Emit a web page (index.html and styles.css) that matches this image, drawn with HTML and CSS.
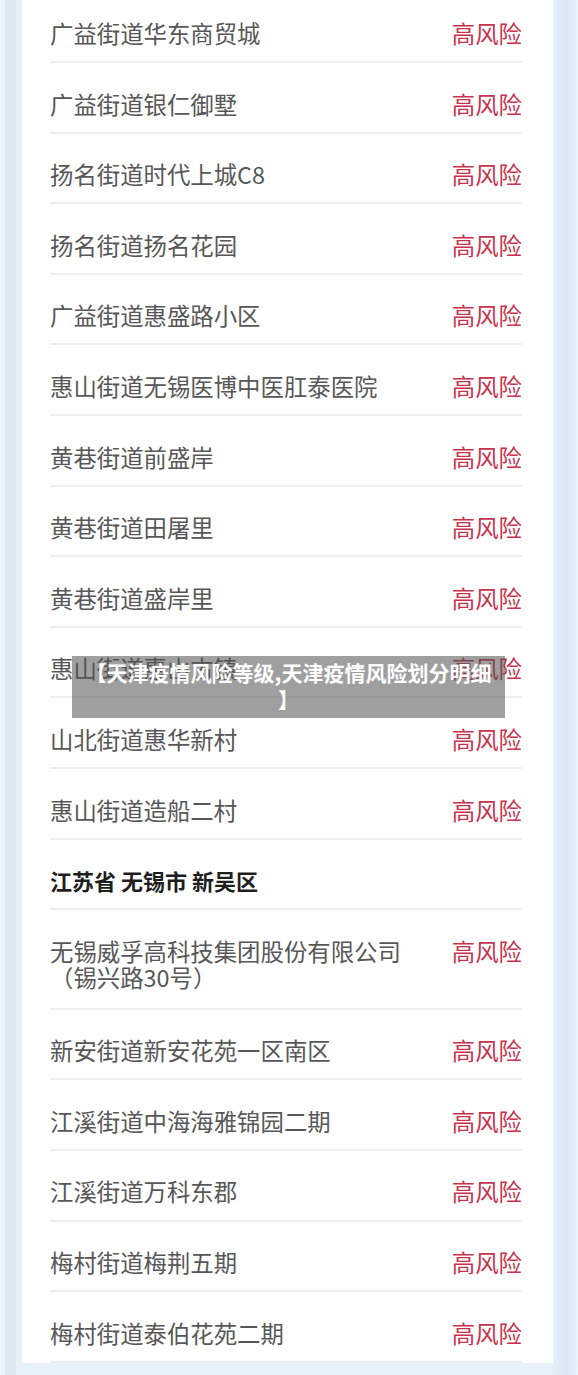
FILE: index.html
```html
<!DOCTYPE html>
<html lang="zh-CN">
<head>
  <meta charset="UTF-8" />
  <meta name="viewport" content="width=device-width, initial-scale=1.0"/>
  <title>天津疫情风险等级</title>
  <link rel="stylesheet" href="styles.css">
</head>
<body>

  <!-- Risk list card -->
  <div class="card">
    <div class="row"><span class="place">广益街道华东商贸城</span><span class="level">高风险</span></div>
    <div class="row"><span class="place">广益街道银仁御墅</span><span class="level">高风险</span></div>
    <div class="row"><span class="place">扬名街道时代上城C8</span><span class="level">高风险</span></div>
    <div class="row"><span class="place">扬名街道扬名花园</span><span class="level">高风险</span></div>
    <div class="row"><span class="place">广益街道惠盛路小区</span><span class="level">高风险</span></div>
    <div class="row"><span class="place">惠山街道无锡医博中医肛泰医院</span><span class="level">高风险</span></div>
    <div class="row"><span class="place">黄巷街道前盛岸</span><span class="level">高风险</span></div>
    <div class="row"><span class="place">黄巷街道田屠里</span><span class="level">高风险</span></div>
    <div class="row"><span class="place">黄巷街道盛岸里</span><span class="level">高风险</span></div>
    <div class="row"><span class="place">惠山街道惠山古镇</span><span class="level">高风险</span></div>
    <div class="row"><span class="place">山北街道惠华新村</span><span class="level">高风险</span></div>
    <div class="row"><span class="place">惠山街道造船二村</span><span class="level">高风险</span></div>

    <div class="row region">江苏省 无锡市 新吴区</div>

    <div class="row tall"><span class="place">无锡威孚高科技集团股份有限公司（锡兴路30号）</span><span class="level">高风险</span></div>
    <div class="row"><span class="place">新安街道新安花苑一区南区</span><span class="level">高风险</span></div>
    <div class="row"><span class="place">江溪街道中海海雅锦园二期</span><span class="level">高风险</span></div>
    <div class="row"><span class="place">江溪街道万科东郡</span><span class="level">高风险</span></div>
    <div class="row"><span class="place">梅村街道梅荆五期</span><span class="level">高风险</span></div>
    <div class="row"><span class="place">梅村街道泰伯花苑二期</span><span class="level">高风险</span></div>
  </div>

  <!-- Caption over the picture -->
  <div class="caption">【天津疫情风险等级,天津疫情风险划分明细】</div>

</body>
</html>
```

FILE: styles.css
```css
body, html {
  margin: 0;
  font-family: "Noto Sans CJK SC", "Noto Sans", sans-serif;
}

body {
  background: linear-gradient(to right,
    #eaf4fb 0, #eaf4fb 5px,
    #dbe9f4 5px, #dbe9f4 16px,
    #e6f1fa 16px, #e6f1fa 553px,
    #e3eff9 553px, #d9e8f4 566px,
    #e8f2fa 578px);
  overflow: hidden;
}

/* Card */
.card {
  background: white;
  margin: -7.5px 25px 0 22px;
  padding: 0 31px 0 28px;
}

.row {
  display: flex;
  justify-content: space-between;
  align-items: flex-start;
  gap: 40px;
  padding: 27.5px 0 15.1px;
  border-bottom: 2px solid #efefef;
  font-size: 23.4px;
  line-height: 26px;
}

.place {
  color: #575757;
}

.level {
  color: #c8324c;
  flex-shrink: 0;
}

.region {
  color: #1e1e1e;
  font-weight: bold;
  font-size: 22px;
}

.tall {
  padding-bottom: 18px;
}

.tall .place {
  width: 360px;
}

/* Caption */
.caption {
  position: absolute;
  top: 656px;
  left: 72px;
  width: 413px;
  padding: 3px 10px 5px;
  background: rgba(80, 80, 80, 0.55);
  color: white;
  font-weight: bold;
  font-size: 21px;
  line-height: 27px;
  text-align: center;
  line-break: anywhere;
}
```
